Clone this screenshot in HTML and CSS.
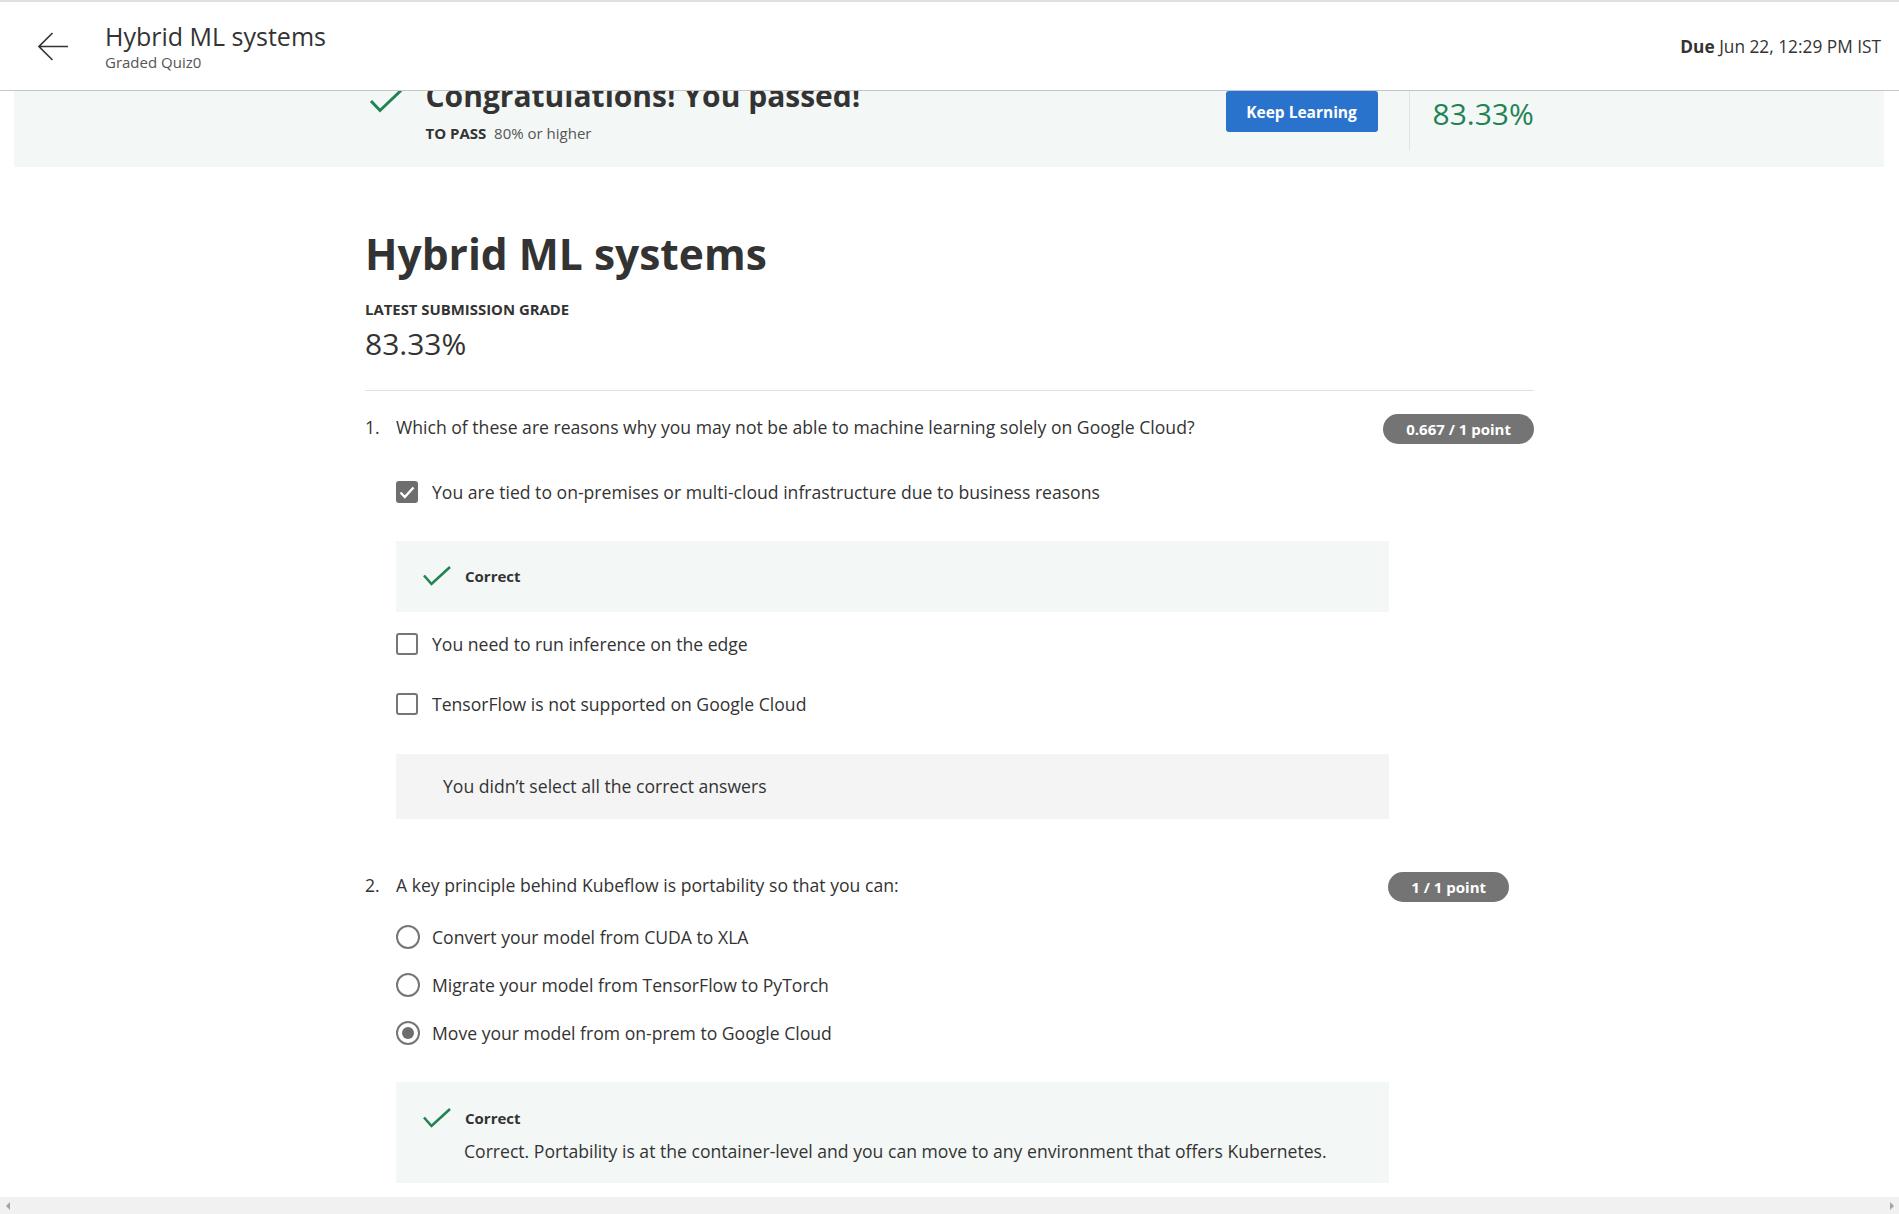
FILE: index.html
```html
<!DOCTYPE html>
<html lang="en">
<head>
<meta charset="utf-8">
<title>Hybrid ML systems</title>
<link rel="stylesheet" href="styles.css">
</head>
<body>
<div class="app">
  <header class="topbar">
    <div class="topbar-left">
      <svg class="back" width="30" height="30" viewBox="0 0 30 30" aria-hidden="true"><path d="M1 14.5H30M14.5 1L1 14.5L14.5 28" fill="none" stroke="#333" stroke-width="1.6"/></svg>
      <div class="titles">
        <div class="titles-main">Hybrid ML systems</div>
        <div class="titles-sub">Graded Quiz0</div>
      </div>
    </div>
    <div class="due"><b>Due</b> Jun 22, 12:29 PM IST</div>
  </header>

  <main class="viewport">
    <div class="scroller">
      <section class="banner">
        <div class="container banner-inner">
          <div class="pass">
            <svg class="pass-check" width="34" height="26" viewBox="0 0 34 26" aria-hidden="true"><path d="M2 12L11 21.5L32 1.5" fill="none" stroke="#1f8354" stroke-width="3"/></svg>
            <div class="pass-text">
              <h2 class="pass-title">Congratulations! You passed!</h2>
              <div class="pass-req"><b>TO PASS</b>&nbsp; 80% or higher</div>
            </div>
          </div>
          <button class="keep">Keep Learning</button>
          <div class="grade-block">
            <div class="grade-label">GRADE</div>
            <div class="grade-val">83.33%</div>
          </div>
        </div>
      </section>

      <div class="container content">
        <h1 class="page-title">Hybrid ML systems</h1>
        <div class="sub-label">LATEST SUBMISSION GRADE</div>
        <div class="sub-grade">83.33%</div>
        <div class="rule"></div>

        <div class="question q1">
          <div class="q-row">
            <span class="q-num">1.</span>
            <span class="q-text">Which of these are reasons why you may not be able to machine learning solely on Google Cloud?</span>
            <span class="badge">0.667 / 1 point</span>
          </div>
          <div class="options checks">
            <div class="opt">
              <span class="cbox on"><svg width="16" height="13" viewBox="0 0 16 13" aria-hidden="true"><path d="M1.5 6.5L5.8 11L14.5 1.5" fill="none" stroke="#fff" stroke-width="2.4"/></svg></span>
              <span class="opt-text">You are tied to on-premises or multi-cloud infrastructure due to business reasons</span>
            </div>
            <div class="fb fb-ok fb-short">
              <div class="fb-head">
                <svg class="ok-check" width="28" height="20" viewBox="0 0 28 20" aria-hidden="true"><path d="M1 9.5L8.5 18L27 1" fill="none" stroke="#1f8354" stroke-width="2.6"/></svg>
                <span>Correct</span>
              </div>
            </div>
            <div class="opt">
              <span class="cbox"></span>
              <span class="opt-text">You need to run inference on the edge</span>
            </div>
            <div class="opt">
              <span class="cbox"></span>
              <span class="opt-text">TensorFlow is not supported on Google Cloud</span>
            </div>
            <div class="fb fb-gray">You didn’t select all the correct answers</div>
          </div>
        </div>

        <div class="question q2">
          <div class="q-row q-row-inset">
            <span class="q-num">2.</span>
            <span class="q-text">A key principle behind Kubeflow is portability so that you can:</span>
            <span class="badge">1 / 1 point</span>
          </div>
          <div class="options radios">
            <div class="opt">
              <span class="radio"></span>
              <span class="opt-text">Convert your model from CUDA to XLA</span>
            </div>
            <div class="opt">
              <span class="radio"></span>
              <span class="opt-text">Migrate your model from TensorFlow to PyTorch</span>
            </div>
            <div class="opt">
              <span class="radio on"></span>
              <span class="opt-text">Move your model from on-prem to Google Cloud</span>
            </div>
            <div class="fb fb-ok">
              <div class="fb-head">
                <svg class="ok-check" width="28" height="20" viewBox="0 0 28 20" aria-hidden="true"><path d="M1 9.5L8.5 18L27 1" fill="none" stroke="#1f8354" stroke-width="2.6"/></svg>
                <span>Correct</span>
              </div>
              <div class="fb-body">Correct. Portability is at the container-level and you can move to any environment that offers Kubernetes.</div>
            </div>
          </div>
        </div>
      </div>
    </div>
  </main>

  <div class="hscroll"><span class="arr arr-l"></span><span class="arr arr-r"></span></div>
</div>
</body>
</html>
```
FILE: styles.css
```css
* { box-sizing: border-box; }
html, body { margin: 0; padding: 0; }
body {
  font-family: "Open Sans", "Noto Sans", sans-serif;
  color: #333;
  background: #fff;
}
.app {
  height: 100vh;
  display: flex;
  flex-direction: column;
  overflow: hidden;
}

/* top bar */
.topbar {
  flex: 0 0 91px;
  height: 91px;
  border-top: 2px solid #dfe0e3;
  border-bottom: 1px solid #c6c6c6;
  background: #fff;
  display: flex;
  align-items: center;
  justify-content: space-between;
  padding: 0 18px 0 38px;
}
.topbar-left { display: flex; align-items: center; }
.back { display: block; margin-right: 37px; margin-top: 1px; }
.titles-main { font-size: 25px; line-height: 32px; color: #333; }
.titles-sub { font-size: 15px; line-height: 20px; color: #555; }
.due { font-size: 17.3px; color: #333; }
.due b { font-weight: 700; }

/* simulated scrolled viewport */
.viewport { flex: 1 1 auto; overflow: hidden; }
.scroller { margin-top: -41px; }

.container { width: 1169px; margin: 0 auto; }

/* banner */
.banner {
  margin: 0 15px 0 14px;
  background: #f3f8f6;
  padding: 24px 0 16px;
}
.banner-inner { display: flex; align-items: flex-start; }
.pass { flex: 1 1 auto; display: flex; align-items: flex-start; }
.pass-check { display: block; margin: 15px 23px 0 4px; }
.pass-title {
  margin: 2px 0 0;
  font-size: 30px;
  line-height: 40px;
  font-weight: 700;
  color: #333;
}
.pass-req { margin-top: 5px; font-size: 15px; line-height: 24px; color: #555; }
.pass-req b { color: #333; }
.keep {
  margin-top: 17px;
  margin-right: 31px;
  height: 41px;
  width: 152px;
  border: 0;
  border-radius: 3px;
  background: #2a73cc;
  color: #fff;
  font-family: inherit;
  font-size: 15.5px;
  font-weight: 700;
  padding: 0;
}
.grade-block {
  width: 125px;
  height: 77px;
  border-left: 1px solid #dfe3e1;
  padding-left: 23px;
}
.grade-label { margin-top: 5px; font-size: 13px; line-height: 15px; font-weight: 700; color: #333; }
.grade-val { font-size: 30px; line-height: 40px; color: #1f8354; }

/* content */
.page-title {
  margin: 59px 0 0;
  font-size: 42.5px;
  line-height: 56px;
  font-weight: 700;
  color: #333;
}
.sub-label { margin-top: 17px; font-size: 14.9px; line-height: 20px; font-weight: 700; color: #333; }
.sub-grade { margin-top: 5px; font-size: 30px; line-height: 40px; color: #333; }
.rule { margin-top: 26px; border-top: 1px solid #e1e1e1; }

.question { font-size: 17.6px; }
.q1 { margin-top: 23px; }
.q2 { margin-top: 53px; }
.q-row { display: flex; align-items: flex-start; }
.q-row-inset { padding-right: 25px; }
.q-num { width: 31px; flex: 0 0 31px; line-height: 26px; }
.q-text { flex: 1 1 auto; line-height: 26px; }
.badge {
  flex: 0 0 auto;
  height: 30px;
  line-height: 30px;
  padding: 0 23px;
  border-radius: 15px;
  background: #747474;
  color: #fff;
  font-size: 15px;
  font-weight: 700;
}

.options { padding-left: 31px; }
.checks { margin-top: 35px; }
.radios { margin-top: 22px; }
.opt { display: flex; align-items: center; height: 26px; }
.opt-text { line-height: 26px; }
.checks .opt + .opt { margin-top: 34px; }
.radios .opt + .opt { margin-top: 22px; }
.fb + .opt { margin-top: 19px; }

.cbox {
  width: 22px;
  height: 22px;
  flex: 0 0 22px;
  border: 2px solid #767676;
  border-radius: 3px;
  margin-right: 14px;
  display: flex;
  align-items: center;
  justify-content: center;
}
.cbox.on { background: #6e6e6e; border-color: #6e6e6e; }
.cbox svg { display: block; }

.radio {
  width: 24px;
  height: 24px;
  flex: 0 0 24px;
  border: 2px solid #767676;
  border-radius: 50%;
  margin-right: 12px;
  display: flex;
  align-items: center;
  justify-content: center;
}
.radio.on::after {
  content: "";
  width: 12px;
  height: 12px;
  border-radius: 50%;
  background: #6e6e6e;
}

.fb { width: 993px; }
.fb-ok { background: #f3f8f6; padding: 24px 27px 19px; margin-top: 36px; }
.fb-short { padding: 23px 27px 24px; margin-top: 36px; }
.fb-head { display: flex; align-items: center; height: 24px; font-size: 15px; font-weight: 700; color: #333; }
.ok-check { display: block; margin-right: 14px; }
.fb-body { margin-top: 8px; padding-left: 41px; line-height: 26px; color: #333; }
.fb-gray {
  margin-top: 37px;
  background: #f4f4f4;
  padding: 19px 47px 20px;
  line-height: 26px;
  color: #333;
}

/* horizontal scrollbar strip */
.hscroll {
  flex: 0 0 17px;
  height: 17px;
  background: #f1f1f1;
  display: flex;
  align-items: center;
  justify-content: space-between;
  padding: 0 5px 0 6px;
}
.arr { width: 0; height: 0; border-top: 4px solid transparent; border-bottom: 4px solid transparent; }
.arr-l { border-right: 4px solid #a3a3a3; }
.arr-r { border-left: 4px solid #a3a3a3; }
```
